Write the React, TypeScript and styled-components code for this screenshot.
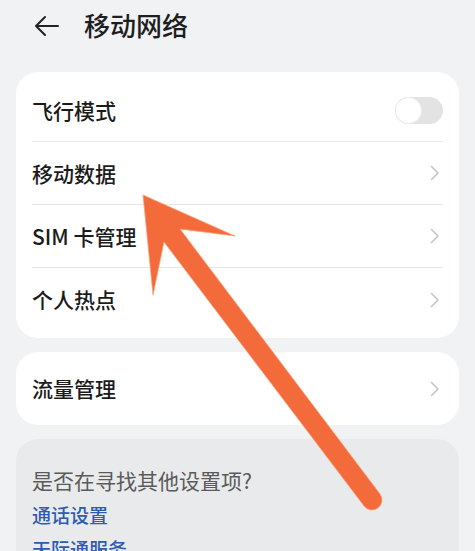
import React from "react";
import styled, { createGlobalStyle } from "styled-components";

const Global = createGlobalStyle`
  html, body { margin: 0; padding: 0; background: #f1f2f4; }
  body { font-family: "Noto Sans CJK SC", "Noto Sans", sans-serif; }
`;

const Page = styled.div`
  position: relative;
  width: 475px;
  height: 551px;
  overflow: hidden;
  background: #f1f2f4;
  padding: 0 16px;
  box-sizing: border-box;
`;

const Header = styled.div`
  height: 52px;
  display: flex;
  align-items: center;
  gap: 24px;
  padding-left: 18px;
  margin-bottom: 20px;
`;

const Title = styled.div`
  font-size: 26px;
  font-weight: 500;
  color: #1e1e1e;
  line-height: 1;
  margin-top: -2px;
`;

const Card = styled.div<{ $gray?: boolean }>`
  background: ${(p) => (p.$gray ? "#e9eaec" : "#ffffff")};
  border-radius: 22px;
  padding: 7px 16px;
  margin-bottom: ${(p) => (p.$gray ? "0" : "14px")};
`;

const Row = styled.div<{ $tall?: boolean; $divider?: boolean }>`
  height: ${(p) => (p.$tall ? 59 : 63)}px;
  display: flex;
  align-items: center;
  justify-content: space-between;
  border-bottom: ${(p) => (p.$divider ? "1px solid #e8e8e8" : "none")};
  box-sizing: border-box;
`;

const Label = styled.span`
  font-size: 21px;
  font-weight: 500;
  color: #1b1b1b;
  line-height: 1;
`;

const Toggle = styled.div`
  width: 48px;
  height: 27px;
  border-radius: 14px;
  background: #e3e3e3;
  position: relative;
  &::after {
    content: "";
    position: absolute;
    left: 1px;
    top: 1px;
    width: 25px;
    height: 25px;
    border-radius: 50%;
    background: #fff;
    box-shadow: 0 0 0 1px #ececec;
  }
`;

const Hint = styled.div`
  padding: 22px 0 5px;
  font-size: 21px;
  color: #5a5a5a;
  line-height: 1.2;
`;

const Link = styled.div`
  font-size: 19px;
  color: #2d5cb0;
  font-weight: 500;
  line-height: 1.2;
  padding: 6px 0 5px;
`;

const ArrowOverlay = styled.svg`
  position: absolute;
  left: 0;
  top: 0;
  pointer-events: none;
`;

const Chevron = () => (
  <svg width="12" height="18" viewBox="0 0 12 18" style={{ marginRight: 2 }}>
    <path d="M2.5 2.5 L9 9 L2.5 15.5" fill="none" stroke="#c6c6c6" strokeWidth="1.6" strokeLinecap="round" strokeLinejoin="round" />
  </svg>
);

const Back = () => (
  <svg width="26" height="22" viewBox="0 0 26 22">
    <path d="M11 2 L2 11 L11 20 M2 11 L24 11" fill="none" stroke="#222" strokeWidth="2" strokeLinecap="round" strokeLinejoin="round" />
  </svg>
);

export default function App() {
  return (
    <>
      <Global />
      <Page>
        <Header>
          <Back />
          <Title>移动网络</Title>
        </Header>
        <Card>
          <Row $divider>
            <Label>飞行模式</Label>
            <Toggle />
          </Row>
          <Row $divider>
            <Label>移动数据</Label>
            <Chevron />
          </Row>
          <Row $divider>
            <Label>SIM 卡管理</Label>
            <Chevron />
          </Row>
          <Row>
            <Label>个人热点</Label>
            <Chevron />
          </Row>
        </Card>
        <Card>
          <Row $tall>
            <Label>流量管理</Label>
            <Chevron />
          </Row>
        </Card>
        <Card $gray>
          <Hint>是否在寻找其他设置项?</Hint>
          <Link>通话设置</Link>
          <Link>天际通服务</Link>
        </Card>
        <ArrowOverlay width="475" height="551" viewBox="0 0 475 551">
          <path
            d="M143 195 L235 236 L180 229 L380 494 A10 10 0 0 1 364 506 L164 242 L153 295 Z"
            fill="#f36b3b"
            stroke="#f7a27c"
            strokeWidth="0.8"
            strokeLinejoin="round"
          />
        </ArrowOverlay>
      </Page>
    </>
  );
}
